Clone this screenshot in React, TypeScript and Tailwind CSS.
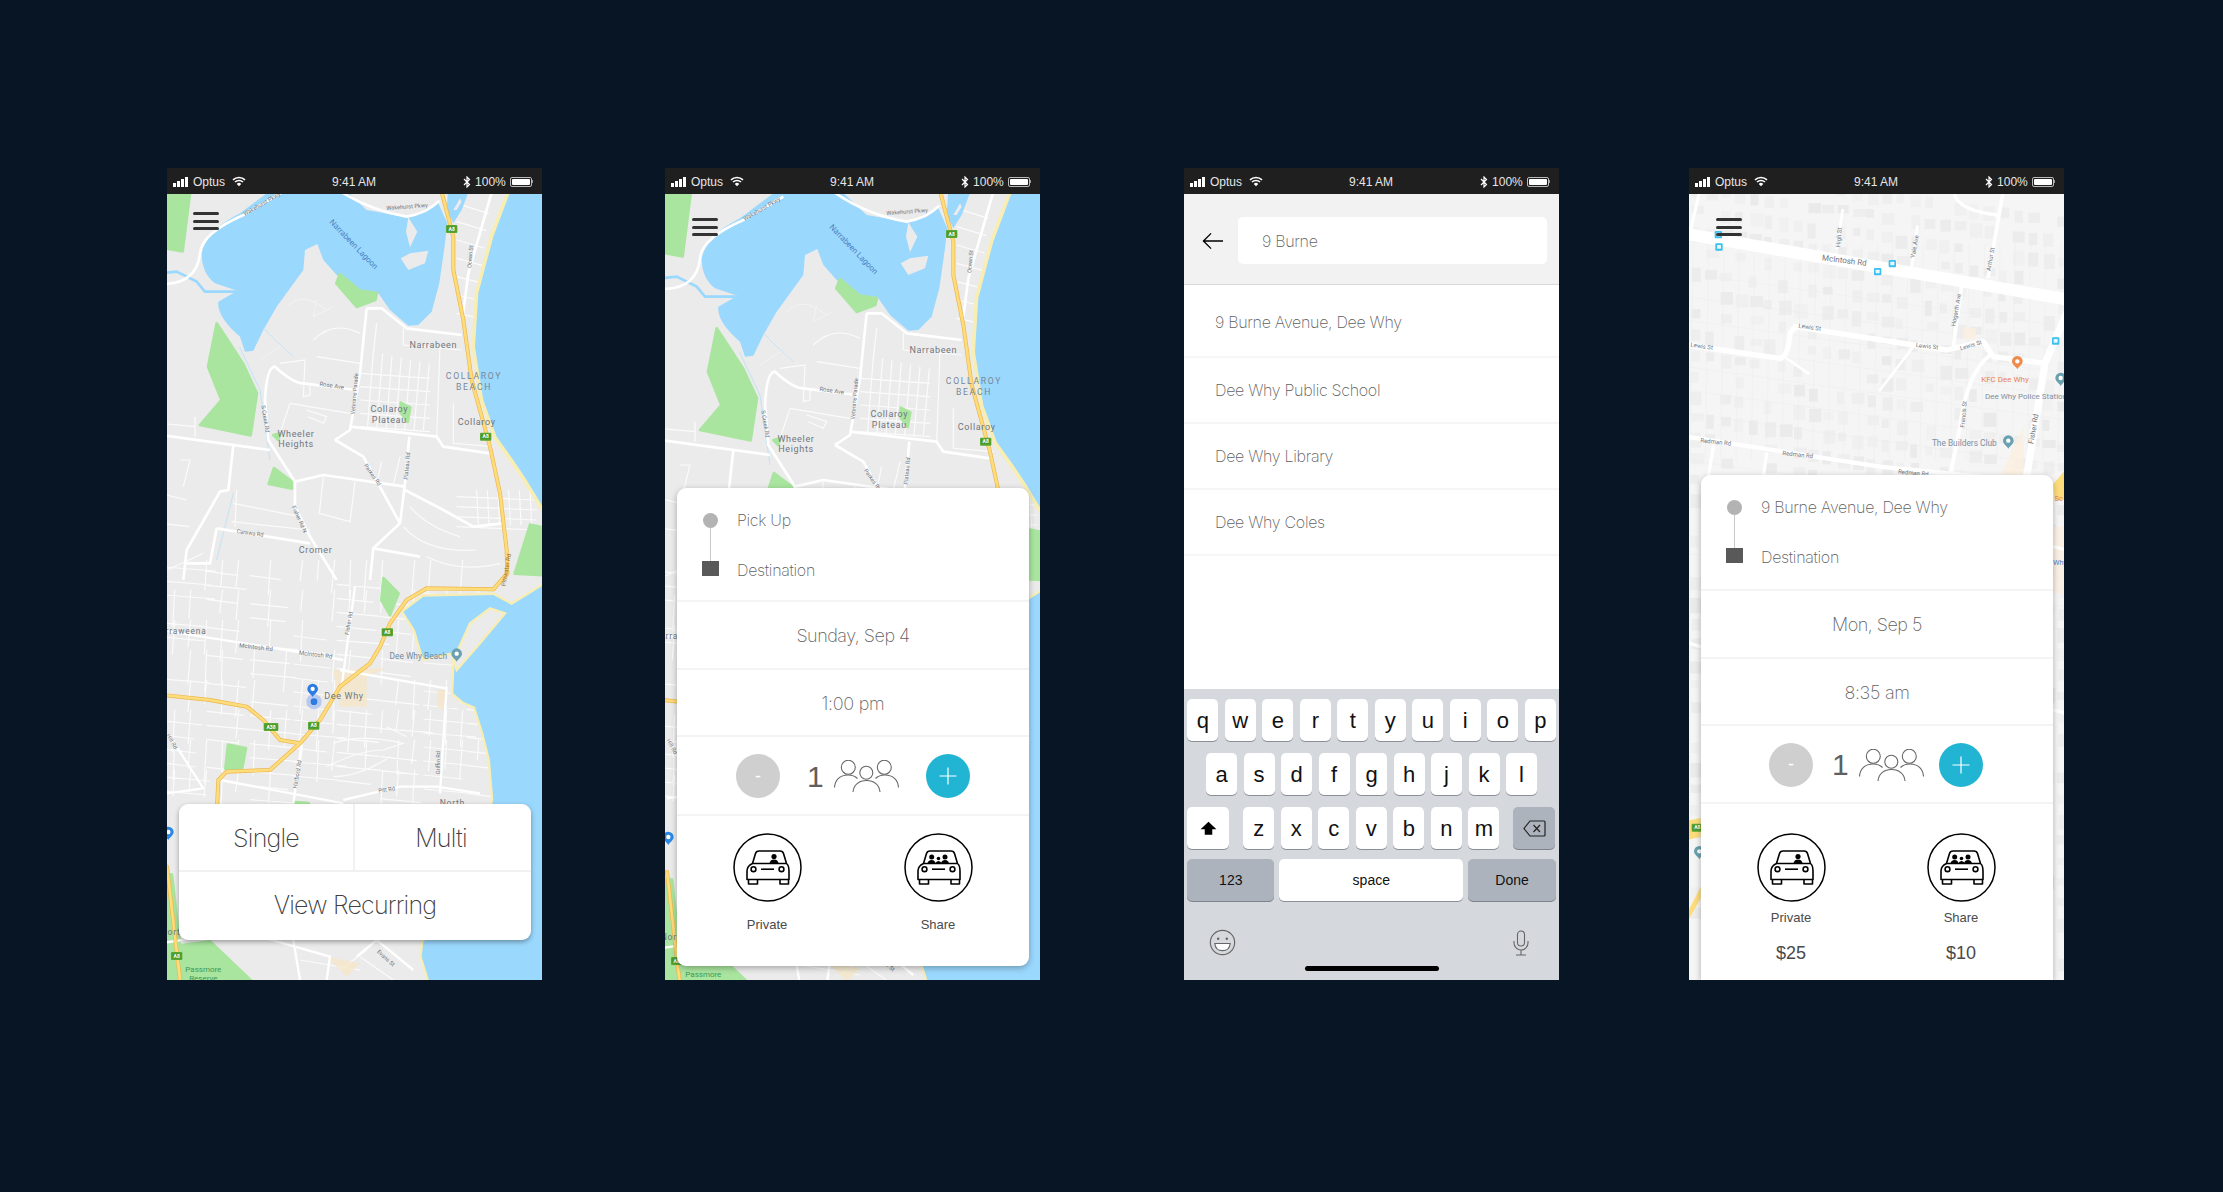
import React from "react";

const SANS = "font-['Liberation_Sans',Arial,sans-serif]";
const THIN = "font-['Inter',sans-serif] font-extralight";

// map drawings use coordinates read from 3x crops of the screens
const rng = (seed: number) => () => {
  seed = (seed * 16807) % 2147483647;
  return seed / 2147483647;
};

const LAGOON =
  "M360 70 L240 160 Q140 210 125 280 Q125 340 165 370 L232 392 L175 425 Q170 470 240 530 L255 575 L280 572 L310 510 L350 440 L430 330 L435 270 L472 252 L490 300 L530 345 L600 395 L655 400 L690 450 L745 497 L775 495 L815 455 L838 370 L855 250 L862 190 L835 130 L800 155 L745 172 L620 150 L535 70 Z";
const OCEAN_N = "M1060 70 L1000 230 L955 400 L945 560 L970 720 L1010 830 L1060 900 L1100 960 L1160 1060 L1160 70 Z";
const OCEAN_S =
  "M1160 10 L1055 75 L1000 45 L790 50 L730 95 L765 150 L790 235 L885 215 L880 340 L910 365 L945 380 L970 460 L990 540 L1000 660 L900 1000 L790 1085 L785 1130 L810 1210 L1160 1210 Z";

const PARKS_N = [
  "M0 70 L94 70 L68 274 L0 262 Z",
  "M170 490 L200 535 L250 612 L291 700 L272 826 L120 795 L184 720 L144 620 Z",
  "M540 342 L529 370 L590 441 L646 420 L651 399 L600 392 Z",
  "M342 924 L396 965 L396 986 L326 972 Z",
  "M722 728 L751 742 L743 786 L722 758 Z",
  "M1110 1094 L1160 1104 L1160 1246 L1064 1241 Z",
  "M340 825 L360 820 L355 840 Z",
];
const PARKS_S = [
  "M670 -6 L716 40 L690 106 L664 60 Z",
  "M204 494 L258 504 L246 568 L196 566 Z",
  "M0 884 L36 884 L60 1096 L150 1084 L276 1204 L0 1210 Z",
  "M404 666 L446 669 L446 676 L404 676 Z",
  "M634 1224 L656 1224 L676 1256 L644 1256 Z",
];

const ROADS_N = [
  "M0 372 Q110 375 120 280 Q125 220 250 165 L370 95",
  "M520 80 Q620 150 740 170 Q800 160 838 122",
  "M1000 80 L925 340 L908 470",
  "M620 445 L600 640 L570 810 L525 840",
  "M620 445 L665 445 L740 505 L905 525",
  "M315 720 Q320 620 345 620 Q400 670 430 670 L590 690",
  "M570 800 L830 830 L850 860 L990 880",
  "M315 720 L325 840 L405 965 L405 1040 L450 1130 L530 1260",
  "M0 825 L330 870",
  "M220 855 L205 990 L180 995 L80 1170 L70 1260",
  "M525 840 L610 890 L720 1090 L640 1165 L630 1260",
  "M748 830 L735 970 L720 1090",
  "M405 965 L490 945 L735 980",
  "M735 990 L850 1050 L940 1100 L1030 1090",
  "M170 1105 L450 1150",
  "M170 1105 L150 1210 L80 1210",
  "M640 1165 L780 1190",
];
const ROADS_S = [
  "M0 150 L380 210 L550 240",
  "M585 20 L545 320",
  "M540 270 L860 325",
  "M860 320 L840 640",
  "M550 660 L720 620 L830 620 L960 640",
  "M425 490 L400 670",
  "M180 600 L550 670",
  "M50 500 L130 625 L21 640",
  "M0 1090 L100 1075 L300 1070 L510 1130 L500 1200",
  "M590 1130 L650 1080 L760 1170",
  "M400 1080 L420 1200",
];

const THIN_N = [
  ...Array.from({ length: 7 }, (_, i) => `M${640 + i * 28} ${575 + i * 6} L${622 + i * 28} 810`),
  ...Array.from({ length: 5 }, (_, i) => `M600 ${640 + i * 40} L810 ${655 + i * 40}`),
  ...Array.from({ length: 7 }, (_, i) => `M890 ${130 + i * 55} L${985 - i * 6} ${160 + i * 52}`),
  ...Array.from({ length: 6 }, (_, i) => `M${950 + i * 32} 990 L${955 + i * 32} 1095`),
  ...Array.from({ length: 4 }, (_, i) => `M890 ${1010 + i * 30} L1130 ${1020 + i * 30}`),
  "M730 505 L730 555 L905 570",
  "M650 490 L640 580 M840 560 L830 830",
  "M460 540 Q520 480 600 520 M470 590 L600 610",
  "M360 610 L435 600 L430 710 L450 705 L450 670",
  "M390 730 L570 760 M390 730 L360 820",
  "M440 750 L500 770 L490 790 L445 770",
  "M0 790 L105 800 M105 770 L105 830 M60 900 L90 900 L70 980",
  "M230 990 L225 1100 M220 1030 L420 1070 M215 1085 L450 1110",
  "M490 950 L478 1060 L570 1085 L585 965",
  "M665 905 L650 975 M720 890 L700 975",
  "M750 1040 Q800 1100 900 1130 M730 1100 Q800 1180 950 1170 M800 1190 Q900 1240 1020 1210",
  "M880 730 L880 850 L1000 860",
  "M0 1000 L80 1020 M0 1090 L90 1100 M130 1180 L0 1240",
];

const southMesh = (() => {
  const r = rng(4711);
  const out: string[] = [];
  for (let x = 40; x < 1000; x += 48) {
    for (let y = -60; y < 660; y += 90) {
      if (r() > 0.3) out.push(`M${x + 4} ${y} L${x - 6 + r() * 6} ${y + 60 + r() * 70}`);
    }
  }
  for (let y = -40; y < 680; y += 42) {
    for (let x = 10; x < 1000; x += 130) {
      if (r() > 0.3) out.push(`M${x} ${y + x * 0.1} L${x + 90 + r() * 70} ${y + x * 0.1 + 12}`);
    }
  }
  out.push("M520 490 Q600 460 730 490 L670 510 Q600 510 500 560 M520 590 Q600 590 690 530 M680 440 L740 470");
  out.push("M600 1130 L700 1200 M540 1170 L620 1110 M420 1140 L600 1170");
  return out.join(" ");
})();

function L({ x, y, t, r = 0, s = 18, c = "#6f7680", ls = 0, w = 400 }: { x: number; y: number; t: string; r?: number; s?: number; c?: string; ls?: number; w?: number }) {
  return (
    <text
      x={x}
      y={y}
      textAnchor="middle"
      dominantBaseline="middle"
      transform={r ? `rotate(${r} ${x} ${y})` : undefined}
      fontSize={s}
      fill={c}
      letterSpacing={ls}
      fontWeight={w}
      className="font-['Roboto',sans-serif]"
    >
      {t}
    </text>
  );
}

function Shield({ x, y, t }: { x: number; y: number; t: string }) {
  const w = t.length > 2 ? 44 : 34;
  return (
    <g>
      <rect x={x - w / 2} y={y - 12} width={w} height={24} rx={3} fill="#5aa632" />
      <rect x={x - w / 2 + 3} y={y - 8} width={w - 6} height={16} fill="#4d9a2c" />
      <text x={x} y={y + 1} textAnchor="middle" dominantBaseline="middle" fontSize={15} fontWeight={700} fill="#fff" className="font-['Roboto',sans-serif]">
        {t}
      </text>
    </g>
  );
}

function Pin({ x, y, c, s = 1 }: { x: number; y: number; c: string; s?: number }) {
  return (
    <g transform={`translate(${x} ${y}) scale(${s})`}>
      <path d="M0 20 C-4 12 -16 6 -16 -4 A16 16 0 0 1 16 -4 C16 6 4 12 0 20 Z" fill={c} />
      <circle cx={0} cy={-4} r={6.5} fill="#fff" />
    </g>
  );
}

const A8_PATH =
  "M838 70 L880 230 L880 330 L910 480 L935 660 L990 860 L1020 1000 L1040 1170 L1042 1240 L1000 1288 L800 1285 L740 1320 L690 1390 L660 1460 L630 1510 L540 1580 L480 1680 L420 1750 L330 1830 L200 1835 L175 1860 L170 1960 M21 2120 L60 2460 M-10 1603 L150 1620 L260 1640 L310 1680 L360 1740 L420 1750";

function CityMap({ box }: { box: string }) {
  return (
    <svg viewBox={box} className="block w-full h-full" preserveAspectRatio="none">
      <rect x={-50} y={0} width={1300} height={2600} fill="#ebebeb" />
      <path d={THIN_N.join(" ")} fill="none" stroke="#fbfbfb" strokeWidth={3.5} />
      <path d="M380 440 Q420 400 470 430 L500 450 M470 420 L460 470 L520 440 M330 520 L400 590 M300 600 L360 560" fill="none" stroke="#f4f4f4" strokeWidth={3} />
      <g transform="translate(0 1260)">
        <path d={southMesh} fill="none" stroke="#fbfbfb" strokeWidth={3.5} />
        <path d="M520 270 L680 265 L620 290 L620 380 L540 380 Z M830 330 L860 330 L850 390 L835 385 Z M500 1130 L600 1150 L560 1190 Z" fill="#f6e7c6" opacity={0.75} />
      </g>

      <path d={OCEAN_N} fill="#f8eeb4" stroke="#f8eeb4" strokeWidth={22} strokeLinejoin="round" />
      <path d={OCEAN_N} fill="#9bd8fd" />
      <path d={LAGOON} fill="#9bd8fd" />
      <path d="M865 70 L935 70 L905 150 L880 190 L860 150 Z" fill="#9bd8fd" />
      <path d="M880 150 L900 115 L905 125 L890 150 Z" fill="#ebebeb" />
      <path d="M722 295 L750 280 L805 272 L795 310 L745 330 Z" fill="#ebebeb" />
      <path d="M745 172 L772 215 L750 262 L738 215 Z" fill="#ebebeb" />
      <path d="M0 340 L50 335 L110 365 L135 395 L230 395" fill="none" stroke="#9bd8fd" strokeWidth={8} />
      <path d="M238 560 L300 690 L330 900 M310 505 L400 590 M170 1200 L220 1000" fill="none" stroke="#c3e3f5" strokeWidth={3} />

      {PARKS_N.map((d) => (
        <path key={d} d={d} fill="#a9e59f" stroke="#a9e59f" strokeWidth={8} strokeLinejoin="round" />
      ))}
      <path d={ROADS_N.join(" ")} fill="none" stroke="#ffffff" strokeWidth={8} strokeLinejoin="round" />

      <g transform="translate(0 1260)">
        <path d={OCEAN_S} fill="#f8eeb4" stroke="#f8eeb4" strokeWidth={14} strokeLinejoin="round" />
        <path d={OCEAN_S} fill="#9bd8fd" />
        <path d="M990 85 L1035 100 L960 190 L890 270 L880 240 L930 130 Z" fill="#ebebeb" stroke="#f8eeb4" strokeWidth={7} />
        {PARKS_S.map((d) => (
          <path key={d} d={d} fill="#a9e59f" stroke="#a9e59f" strokeWidth={8} strokeLinejoin="round" />
        ))}
        <path d={ROADS_S.join(" ")} fill="none" stroke="#ffffff" strokeWidth={7} strokeLinejoin="round" />
      </g>

      {/* motorway, A8 then A38 */}
      <g fill="none" strokeLinejoin="round" strokeLinecap="round">
        <path d={A8_PATH} stroke="#eeb64c" strokeWidth={12} />
        <path d={A8_PATH} stroke="#fddc7c" strokeWidth={8} />
      </g>

      <L x={306} y={133} t="Wakehurst Pkwy" r={-30} s={17} />
      <L x={741} y={141} t="Wakehurst Pkwy" r={-4} s={17} />
      <L x={580} y={254} t="Narrabeen Lagoon" r={46} s={24} c="#4a7fc1" />
      <L x={932} y={290} t="Ocean St" r={-85} s={17} />
      <Shield x={875} y={207} t="A8" />
      <L x={820} y={557} t="Narrabeen" s={27} ls={2} />
      <L x={942} y={651} t="COLLAROY" s={26} ls={5} c="#77879b" />
      <L x={942} y={684} t="BEACH" s={26} ls={5} c="#77879b" />
      <L x={515} y={678} t="Rose Ave" r={9} s={18} />
      <L x={585} y={702} t="Veterans Parade" r={-85} s={17} />
      <L x={688} y={750} t="Collaroy" s={27} ls={2} />
      <L x={688} y={782} t="Plateau" s={27} ls={2} />
      <L x={950} y={789} t="Collaroy" s={27} ls={2} />
      <Shield x={977} y={830} t="A8" />
      <L x={315} y={777} t="S Creek Rd" r={80} s={17} />
      <L x={408} y={823} t="Wheeler" s={27} ls={2} />
      <L x={408} y={855} t="Heights" s={27} ls={2} />
      <L x={637} y={945} t="Parkes Rd" r={55} s={17} />
      <L x={742} y={918} t="Plateau Rd" r={-85} s={17} />
      <L x={417} y={1078} t="Fisher Rd N" r={65} s={17} />
      <L x={270} y={1120} t="Carawa Rd" r={8} s={17} />
      <L x={467} y={1173} t="Cromer" s={27} ls={2} />
      <L x={1040} y={1230} t="Pittwater Rd" r={-80} s={18} c="#9a6a25" />
      <g transform="translate(0 1260)">
        <L x={60} y={155} t="Narraweena" s={25} ls={2.5} />
        <L x={288} y={203} t="McIntosh Rd" r={7} s={18} />
        <L x={467} y={225} t="McIntosh Rd" r={7} s={18} />
        <L x={568} y={130} t="Fisher Rd" r={-80} s={17} />
        <L x={775} y={229} t="Dee Why Beach" s={25} c="#6f8aa0" />
        <Pin x={890} y={225} c="#6aa0b0" />
        <L x={552} y={350} t="Dee Why" s={27} ls={2} />
        <L x={413} y={583} t="Harbord Rd" r={-80} s={17} />
        <L x={836} y={548} t="Griffin Rd" r={-90} s={17} />
        <L x={680} y={630} t="Pitt Rd" r={-9} s={17} />
        <L x={35} y={485} t="Hill Rd" r={60} s={17} />
        <L x={877} y={672} t="North" s={26} ls={2} />
        <L x={677} y={1135} t="Evans St" r={42} s={17} />
        <L x={130} y={1170} t="Passmore" s={24} c="#3c9a57" />
        <L x={130} y={1197} t="Reserve" s={24} c="#3c9a57" />
        <L x={40} y={1057} t="North" s={26} ls={2} />
        <Shield x={682} y={157} t="A8" />
        <Shield x={461} y={437} t="A8" />
        <Shield x={333} y={441} t="A38" />
        <Shield x={50} y={1128} t="A8" />
        <circle cx={462} cy={365} r={23} fill="#b8c9ec" />
        <circle cx={462} cy={365} r={10} fill="#2b7be4" />
        <Pin x={458} y={331} c="#2b7be4" />
        <Pin x={25} y={760} c="#2b88e4" />
      </g>
    </svg>
  );
}

const blocks = (() => {
  const r = rng(90210);
  const out: { x: number; y: number; w: number; h: number; o: number }[] = [];
  for (let y = 100; y < 2470; y += 62) {
    for (let x = 30; x < 1160; x += 44) {
      if (r() > 0.25) {
        out.push({ x: x + r() * 6, y: y + (x - 30) * 0.14 - 90 + r() * 8, w: 20 + r() * 20, h: 22 + r() * 24, o: 0.35 + r() * 0.65 });
      }
    }
  }
  return out;
})();

const lots = [
  ...Array.from({ length: 25 }, (_, i) => `M${40 + i * 46} 250 L${30 + i * 46} 900`),
  ...Array.from({ length: 15 }, (_, i) => `M20 ${340 + i * 70} L1160 ${500 + i * 70}`),
].join(" ");

function Stop({ x, y }: { x: number; y: number }) {
  return (
    <g>
      <rect x={x - 11} y={y - 11} width={22} height={22} rx={3} fill="#3cc0ee" />
      <rect x={x - 6} y={y - 6} width={12} height={11} rx={2} fill="#e8f8fd" />
    </g>
  );
}

function StreetMap() {
  return (
    <svg viewBox="27 102 1125 2358" className="block w-full h-full" preserveAspectRatio="none">
      <rect x={0} y={0} width={1300} height={2600} fill="#f5f5f5" />
      <path d={lots} stroke="#efefef" strokeWidth={2} fill="none" />
      {blocks.map((b, i) => (
        <rect key={i} x={b.x} y={b.y} width={b.w} height={b.h} fill="#eaeaea" opacity={b.o} />
      ))}
      <path d="M960 950 L1030 800 L1030 950 Z M850 500 L890 505 L885 540 L850 535 Z M1120 1100 L1160 1100 L1160 1300 L1120 1300 Z" fill="#fbefe0" opacity={0.8} />
      <g fill="none" stroke="#fff" strokeLinecap="round" strokeLinejoin="round">
        <path d="M20 222 L1160 418" strokeWidth={36} />
        <path d="M0 552 L300 595 Q325 590 330 520 L345 500 L700 555 L800 570 L910 545 L940 590 L1095 610" strokeWidth={16} />
        <path d="M1160 460 L1095 610 L1040 950" strokeWidth={22} />
        <path d="M930 585 Q860 640 840 800 L810 950" strokeWidth={12} />
        <path d="M845 375 L820 560 M970 90 L925 350" strokeWidth={11} />
        <path d="M20 830 L600 920 L1000 960" strokeWidth={13} />
        <path d="M712 200 L695 320 M488 150 L470 265 M700 560 L600 690 M320 595 L385 640" strokeWidth={8} />
        <path d="M820 90 Q825 150 950 165 M60 90 L28 225 M100 860 L85 950 M260 880 L250 950" strokeWidth={10} />
        <path d="M0 1440 L60 1460 M1120 1160 L1160 1170 M1120 1650 L1160 1660" strokeWidth={10} />
      </g>
      <path d="M1120 972 L1160 925 L1160 1020 L1124 1020 Z M20 1982 L62 1974 L62 2030 L20 2040 Z M20 2262 L62 2180 L62 2215 L20 2290 Z" fill="#fddc7c" />
      <Stop x={115} y={224} />
      <Stop x={117} y={261} />
      <Stop x={637} y={311} />
      <Stop x={593} y={335} />
      <Stop x={1127} y={543} />
      <L x={493} y={303} t="McIntosh Rd" r={7} s={24} />
      <L x={478} y={232} t="High St" r={-85} s={18} />
      <L x={705} y={260} t="Vale Ave" r={-80} s={18} />
      <L x={933} y={298} t="Arthur St" r={-80} s={18} />
      <L x={830} y={450} t="Hogarth Ave" r={-80} s={18} />
      <L x={389} y={503} t="Lewis St" r={8} s={18} />
      <L x={741} y={560} t="Lewis St" r={6} s={18} />
      <L x={873} y={557} t="Lewis St" r={-17} s={18} />
      <L x={65} y={560} t="Lewis St" r={8} s={18} />
      <L x={852} y={763} t="Francis St" r={-85} s={18} />
      <L x={1062} y={807} t="Fisher Rd" r={-80} s={22} />
      <L x={107} y={847} t="Redman Rd" r={6} s={18} />
      <L x={353} y={885} t="Redman Rd" r={6} s={18} />
      <L x={700} y={940} t="Redman Rd" r={5} s={18} />
      <Pin x={1012} y={608} c="#f08a4b" />
      <L x={975} y={660} t="KFC Dee Why" s={24} c="#e5835a" />
      <Pin x={1142} y={658} c="#6aa0b0" />
      <L x={1038} y={711} t="Dee Why Police Station" s={24} c="#7d8fa3" />
      <L x={853} y={851} t="The Builders Club" s={25} c="#7d8fa3" />
      <Pin x={985} y={846} c="#6aa0b0" />
      <Shield x={52} y={2003} t="A8" />
      <Pin x={58} y={2078} c="#6aa0b0" />
      <L x={1140} y={1210} t="Why" s={22} c="#4a7fc1" />
      <L x={1136} y={1018} t="Sc" s={22} c="#e5835a" />
    </svg>
  );
}

function StatusBar() {
  return (
    <div className={`relative flex h-[26px] shrink-0 items-center bg-[#1f1f1f] pt-[1px] text-[12px] text-[#e6e6e6] ${SANS}`}>
      <div className="ml-[6px] flex h-[10px] w-[17px] items-end gap-[1px]">
        <span className="h-[4px] w-[3px] bg-white" />
        <span className="h-[6px] w-[3px] bg-white" />
        <span className="h-[8px] w-[3px] bg-white" />
        <span className="h-[10px] w-[3px] bg-white" />
      </div>
      <span className="ml-[3px]">Optus</span>
      <svg viewBox="0 0 14 10" className="ml-[7px] h-[11px] w-[14px]">
        <path d="M1 3.4 A8.5 8.5 0 0 1 13 3.4 M3 5.6 A5.6 5.6 0 0 1 11 5.6" fill="none" stroke="#fff" strokeWidth={1.5} />
        <path d="M4.8 7.4 A3 3 0 0 1 9.2 7.4 L7 9.8 Z" fill="#fff" />
      </svg>
      <span className="ml-[86px]">9:41 AM</span>
      <svg viewBox="0 0 8 12" className="ml-[87px] h-[12px] w-[8px]">
        <path d="M1 3 L6.5 8.5 L4 11 V1 L6.5 3.5 L1 9" fill="none" stroke="#fff" strokeWidth={1.2} />
      </svg>
      <span className="ml-[4px]">100%</span>
      <div className="ml-[4px] flex h-[10px] w-[22px] items-center rounded-[2px] border border-[#bbb] p-[1px]">
        <div className="h-full w-full rounded-[1px] bg-white" />
      </div>
      <span className="h-[3px] w-[1px] bg-[#999]" />
    </div>
  );
}

function Burger({ pos }: { pos: string }) {
  return (
    <div className={`absolute flex w-[26px] flex-col gap-[4.5px] ${pos}`}>
      <span className="h-[3px] rounded-full bg-[#333]" />
      <span className="h-[3px] rounded-full bg-[#333]" />
      <span className="h-[3px] rounded-full bg-[#333]" />
    </div>
  );
}

function People() {
  return (
    <svg viewBox="0 0 65 32" className="h-[32px] w-[65px]" fill="none" stroke="#666" strokeWidth={1.1}>
      <circle cx={14.3} cy={7.3} r={7} />
      <circle cx={32.3} cy={12.7} r={6.5} />
      <circle cx={50.3} cy={7.3} r={7} />
      <path d="M0.5 27.5 C1 20 6 15 14 15 C17 15 21 16 23.5 18.5" />
      <path d="M64.5 27.5 C64 20 59 15 51 15 C48 15 44 16 41.5 18.5" />
      <path d="M19 32 C19.5 25 25 20.5 32.5 20.5 C40 20.5 45.5 25 46 32" />
    </svg>
  );
}

function CarIcon({ share }: { share?: boolean }) {
  return (
    <svg viewBox="0 0 69 69" className="h-[69px] w-[69px]">
      <circle cx={34.5} cy={34.5} r={33.5} fill="none" stroke="#000" strokeWidth={1.5} />
      <g fill="none" stroke="#000" strokeWidth={1.6} strokeLinejoin="round">
        <path d="M14 46.5 V38 Q14 33 19.5 30.5 L22.5 20.5 Q23.2 18 26 18 H47 Q49.8 18 50.5 20.5 L53.5 30.5 Q56 32.5 56 38 V46.5 Z" />
        <path d="M19.5 30.5 H53.5" />
        <path d="M15.5 46.5 V51 H24.5 V46.5 M47 46.5 V51 H55.5 V46.5" />
        <circle cx={20.5} cy={36.2} r={2.4} />
        <circle cx={48.5} cy={36.2} r={2.4} />
        <path d="M28 36.2 H41" />
      </g>
      {share ? (
        <g fill="#000">
          <circle cx={27.7} cy={24} r={2.5} />
          <circle cx={34.5} cy={25.5} r={1.8} />
          <circle cx={41} cy={24} r={2.5} />
          <path d="M23.5 30.5 Q24 27 27.7 27 Q31 27 31.5 30.5 Z" />
          <path d="M31.5 30.5 Q32 28 34.5 28 Q37 28 37.5 30.5 Z" />
          <path d="M37 30.5 Q37.5 27 41 27 Q44.5 27 45 30.5 Z" />
        </g>
      ) : (
        <g fill="#000">
          <circle cx={41} cy={23.5} r={2.6} />
          <path d="M36.5 30.5 Q37 26.5 41 26.5 Q45 26.5 45.5 30.5 Z" />
        </g>
      )}
    </svg>
  );
}

type TripProps = {
  from: string;
  date: string;
  time: string;
  routeH: string;
  stepperH: string;
  minusMl: string;
  oneMl: string;
  plusMl: string;
  carsPt: string;
  labelMt: string;
  colGap: string;
  price?: [string, string];
  pos: string;
};

function TripCard(p: TripProps) {
  const rowLine = "border-b-2 border-[#f4f4f4]";
  return (
    <div className={`absolute left-[12px] w-[352px] overflow-hidden bg-white shadow-[0_2px_6px_rgba(0,0,0,0.3)] ${p.pos}`}>
      <div className={`flex items-start pl-[25px] pt-[20px] ${rowLine} ${p.routeH}`}>
        <div className="mt-[4.5px] flex w-[17px] flex-col items-center">
          <span className="h-[15px] w-[15px] rounded-full bg-[#b3b3b3]" />
          <span className="h-[33px] w-[1px] bg-[#c8c8c8]" />
          <span className="h-[15px] w-[17px] bg-[#595959]" />
        </div>
        <div className={`ml-[18px] flex flex-col gap-[26px] text-[16px] leading-[24px] tracking-[-0.3px] text-[#5f5f5f] ${THIN}`}>
          <span>{p.from}</span>
          <span>Destination</span>
        </div>
      </div>
      <div className={`flex h-[68px] items-center justify-center pt-[1px] text-[18px] tracking-[-0.5px] text-[#5f5f5f] ${rowLine} ${THIN}`}>{p.date}</div>
      <div className={`flex h-[67px] items-center justify-center pt-[1px] text-[18px] tracking-[-0.3px] text-[#5f5f5f] ${rowLine} ${THIN}`}>{p.time}</div>
      <div className={`flex items-center pt-[1px] ${rowLine} ${p.stepperH}`}>
        <div className={`flex h-[44px] w-[44px] items-center justify-center rounded-full bg-[#cfcfcf] text-[18px] text-white ${p.minusMl} ${SANS}`}>-</div>
        <span className={`text-[30px] font-light text-[#5f5f5f] ${p.oneMl} ${SANS}`}>1</span>
        <div className="ml-[10px]">
          <People />
        </div>
        <div className={`flex h-[44px] w-[44px] items-center justify-center rounded-full bg-[#22b5d3] ${p.plusMl}`}>
          <svg viewBox="0 0 18 18" className="h-[18px] w-[18px]">
            <path d="M9 0.5 V17.5 M0.5 9 H17.5" stroke="#fff" strokeWidth={1.2} />
          </svg>
        </div>
      </div>
      <div className={`flex pl-[40px] ${p.colGap} ${p.carsPt}`}>
        {[false, true].map((share, i) => (
          <div key={i} className={`flex w-[100px] flex-col items-center text-[#4a4a4a] ${SANS}`}>
            <CarIcon share={share} />
            <span className={`text-[13px] leading-[16px] ${p.labelMt}`}>{share ? "Share" : "Private"}</span>
            {p.price && <span className="mt-[16px] text-[18px] leading-[22px]">{p.price[i]}</span>}
          </div>
        ))}
      </div>
    </div>
  );
}

function Phone({ ml, children }: { ml: string; children: React.ReactNode }) {
  return <div className={`flex h-[812px] w-[375px] shrink-0 flex-col overflow-hidden ${ml}`}>{children}</div>;
}

const KEYS_1 = "qwertyuiop".split("");
const KEYS_2 = "asdfghjkl".split("");
const KEYS_3 = "zxcvbnm".split("");

function Key({ k }: { k: string }) {
  return <div className="flex h-[42px] w-[31px] items-center justify-center rounded-[5px] bg-white pt-[1px] text-[22px] text-[#111] shadow-[0_1px_0_#8a8e96]">{k}</div>;
}

function Keyboard() {
  return (
    <div className={`relative flex h-[291px] flex-col gap-[12px] bg-[#d5d8dd] pt-[10px] ${SANS}`}>
      <div className="ml-[3.3px] flex gap-[6.5px]">
        {KEYS_1.map((k) => (
          <Key key={k} k={k} />
        ))}
      </div>
      <div className="ml-[22px] flex gap-[6.5px]">
        {KEYS_2.map((k) => (
          <Key key={k} k={k} />
        ))}
      </div>
      <div className="ml-[3.3px] flex">
        <div className="flex h-[42px] w-[41.5px] items-center justify-center rounded-[5px] bg-white shadow-[0_1px_0_#8a8e96]">
          <svg viewBox="0 0 20 18" className="h-[15px] w-[19px]">
            <path d="M10 1 L19.5 10 H14.5 V16.5 H5.5 V10 H0.5 Z" fill="#000" />
          </svg>
        </div>
        <div className="ml-[14.5px] flex gap-[6.5px]">
          {KEYS_3.map((k) => (
            <Key key={k} k={k} />
          ))}
        </div>
        <div className="ml-[14px] flex h-[42px] w-[41.5px] items-center justify-center rounded-[5px] bg-[#adb3bc] shadow-[0_1px_0_#7f838a]">
          <svg viewBox="0 0 23 17" className="h-[17px] w-[23px]" fill="none" stroke="#222" strokeWidth={1.2}>
            <path d="M7 1 H21 Q22 1 22 2 V15 Q22 16 21 16 H7 L1 8.5 Z" />
            <path d="M10.5 5 L17 12 M17 5 L10.5 12" />
          </svg>
        </div>
      </div>
      <div className="-mt-[2px] ml-[3.3px] flex gap-[5px] text-[14px] text-[#111]">
        <div className="flex h-[42px] w-[87px] items-center justify-center rounded-[5px] bg-[#adb3bc] shadow-[0_1px_0_#7f838a]">123</div>
        <div className="flex h-[42px] w-[184px] items-center justify-center rounded-[5px] bg-white shadow-[0_1px_0_#8a8e96]">space</div>
        <div className="flex h-[42px] w-[87.5px] items-center justify-center rounded-[5px] bg-[#adb3bc] shadow-[0_1px_0_#7f838a]">Done</div>
      </div>
      <div className="flex items-center justify-between pl-[25px] pr-[30px] pt-[16px]">
        <svg viewBox="0 0 28 28" className="h-[27px] w-[27px]" fill="none" stroke="#666" strokeWidth={1.2}>
          <circle cx={14} cy={14} r={12.6} />
          <circle cx={9.5} cy={10} r={1.3} fill="#666" stroke="none" />
          <circle cx={18.5} cy={10} r={1.3} fill="#666" stroke="none" />
          <path d="M6 15 H22 C21.5 20 18 22.5 14 22.5 C10 22.5 6.5 20 6 15 Z" fill="#fff" />
        </svg>
        <svg viewBox="0 0 16 26" className="h-[26px] w-[16px]" fill="none" stroke="#666" strokeWidth={1.1}>
          <rect x={4.5} y={1} width={7} height={15} rx={3.5} />
          <path d="M1 11 V13 A7 7 0 0 0 15 13 V11 M8 20 V25 M3 25 H13" />
        </svg>
      </div>
      <div className="absolute left-[121px] top-[277px] h-[5px] w-[134px] rounded-full bg-black" />
    </div>
  );
}

export default function App() {
  const results = ["9 Burne Avenue, Dee Why", "Dee Why Public School", "Dee Why Library", "Dee Why Coles"];
  return (
    <div className="flex h-screen w-full items-start overflow-hidden bg-[#071524] pl-[167px] pt-[168px]">
      <Phone ml="ml-0">
        <StatusBar />
        <div className="relative flex-1">
          <CityMap box="21 102 1125 2358" />
          <Burger pos="left-[26px] top-[18px]" />
          <div className={`absolute bottom-[40px] left-[12px] w-[352px] rounded-[9px] bg-white text-[25px] tracking-[-0.8px] text-[#404040] shadow-[0_2px_5px_rgba(0,0,0,0.35)] ${THIN}`}>
            <div className="flex h-[68px] border-b-2 border-[#f1f1f1] pt-[3px]">
              <div className="-mt-[3px] flex w-[176px] items-center justify-center border-r-2 border-[#f1f1f1] pt-[3px]">Single</div>
              <div className="flex flex-1 items-center justify-center pr-[4px]">Multi</div>
            </div>
            <div className="flex h-[68px] items-center justify-center">View Recurring</div>
          </div>
        </div>
      </Phone>

      <Phone ml="ml-[123px]">
        <StatusBar />
        <div className="relative flex-1">
          <CityMap box="15 87 1125 2358" />
          <Burger pos="left-[27px] top-[24px]" />
          <TripCard
            pos="top-[294px] h-[478px] rounded-[9px]"
            from="Pick Up"
            date="Sunday, Sep 4"
            time="1:00 pm"
            routeH="h-[114px]"
            stepperH="h-[79px]"
            minusMl="ml-[59px]"
            oneMl="ml-[27px]"
            plusMl="ml-[27px]"
            carsPt="pt-[17px]"
            labelMt="mt-[15px]"
            colGap="gap-[71px]"
          />
        </div>
      </Phone>

      <Phone ml="ml-[144px]">
        <StatusBar />
        <div className="flex h-[91px] items-center gap-[15px] border-b border-[#d9d9d9] bg-[#f2f2f2] pl-[18px] pt-[3px]">
          <svg viewBox="0 0 22 18" className="h-[18px] w-[21px]" fill="none" stroke="#000" strokeWidth={1.4}>
            <path d="M22 9 H1.5 M9.5 1 L1.5 9 L9.5 17" />
          </svg>
          <div className={`flex h-[47px] w-[309px] items-center rounded-[5px] bg-white pl-[24px] text-[16px] tracking-[-0.3px] text-[#5f5f5f] ${THIN}`}>9 Burne</div>
        </div>
        <div className={`flex-1 bg-white text-[16px] tracking-[-0.3px] text-[#5f5f5f] ${THIN}`}>
          {results.map((r, i) => (
            <div key={r} className={`flex items-center border-b-2 border-[#f6f6f6] pl-[31px] ${i === 0 ? "h-[73px] pt-[3px]" : "h-[66px]"}`}>
              {r}
            </div>
          ))}
        </div>
        <Keyboard />
      </Phone>

      <Phone ml="ml-[130px]">
        <StatusBar />
        <div className="relative flex-1">
          <StreetMap />
          <Burger pos="left-[27px] top-[24px]" />
          <TripCard
            pos="top-[281px] bottom-0 rounded-t-[9px]"
            from="9 Burne Avenue, Dee Why"
            date="Mon, Sep 5"
            time="8:35 am"
            routeH="h-[116px]"
            stepperH="h-[78px]"
            minusMl="ml-[68px]"
            oneMl="ml-[19px]"
            plusMl="ml-[15px]"
            carsPt="pt-[29px]"
            labelMt="mt-[8px]"
            colGap="gap-[70px]"
            price={["$25", "$10"]}
          />
        </div>
      </Phone>
    </div>
  );
}
